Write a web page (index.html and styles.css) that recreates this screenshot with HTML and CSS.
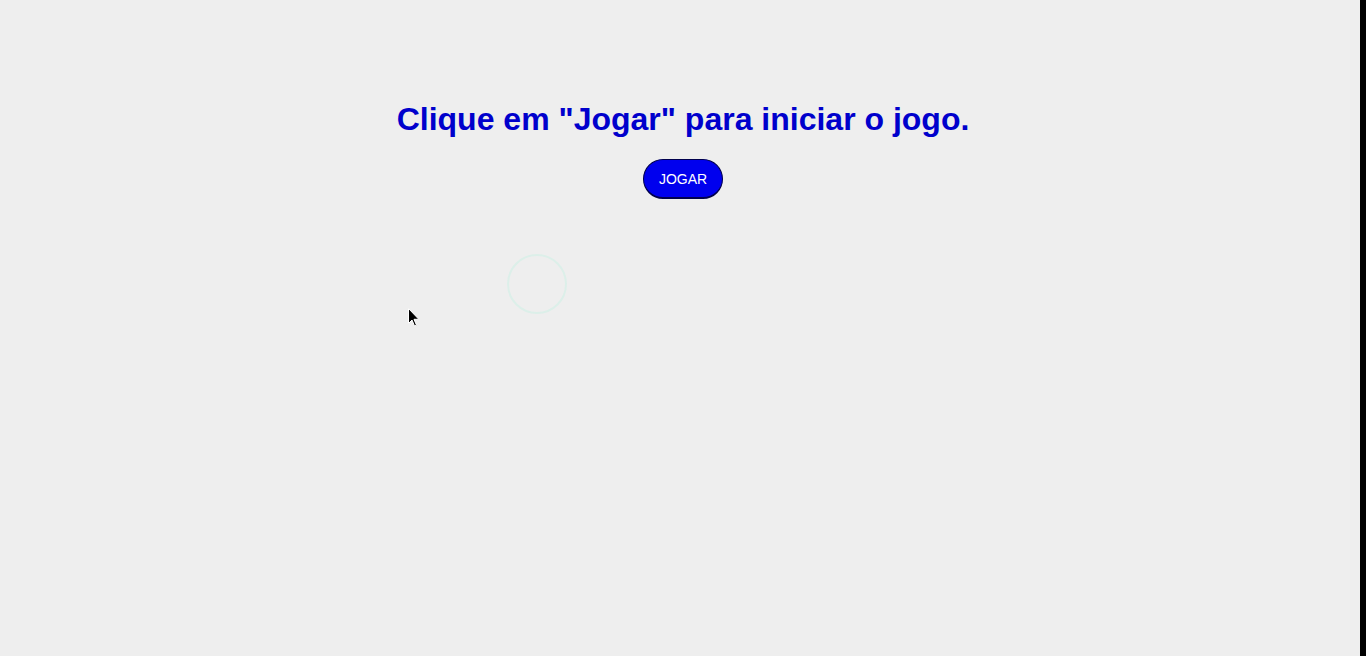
FILE: index.html
```html
<!DOCTYPE html>
<html lang="pt">
<head>
<meta charset="utf-8">
<title>Jogo</title>
<link rel="stylesheet" href="styles.css">
</head>
<body>
<main class="stage">
  <h1 class="title">Clique em "Jogar" para iniciar o jogo.</h1>
  <button class="play">JOGAR</button>
</main>
<div class="ring"></div>
<svg class="cursor" width="12" height="20" viewBox="0 0 12 20"><path d="M0.5 0.5 L0.5 15.5 L4 12 L6.5 18 L8.5 17.2 L6 11.3 L10.8 11.3 Z" fill="#000" stroke="#fff" stroke-width="1"/></svg>
<div class="edge"></div>
</body>
</html>
```
FILE: styles.css
```css
html, body {
  margin: 0;
  padding: 0;
  height: 100%;
  background: #eeeeee;
  overflow: hidden;
}
.stage {
  display: flex;
  flex-direction: column;
  align-items: center;
  padding-top: 100px;
  font-family: "Liberation Sans", Arial, sans-serif;
}
.title {
  margin: 0;
  font-size: 32px;
  line-height: 38px;
  font-weight: bold;
  color: #0000cc;
}
.play {
  margin-top: 21px;
  width: 80px;
  height: 40px;
  border-radius: 20px;
  border: 1px solid #00004d;
  border-bottom-width: 2px;
  background: #0000ee;
  color: #ffffff;
  font-family: "Liberation Sans", Arial, sans-serif;
  font-size: 14px;
  padding: 0;
}
.ring {
  position: absolute;
  left: 507px;
  top: 254px;
  width: 56px;
  height: 56px;
  border: 2px solid #dcefe9;
  border-radius: 50%;
}
.cursor {
  position: absolute;
  left: 408px;
  top: 308px;
}
.edge {
  position: fixed;
  right: 0;
  top: 0;
  width: 6px;
  height: 100%;
  background: #000;
}
```
